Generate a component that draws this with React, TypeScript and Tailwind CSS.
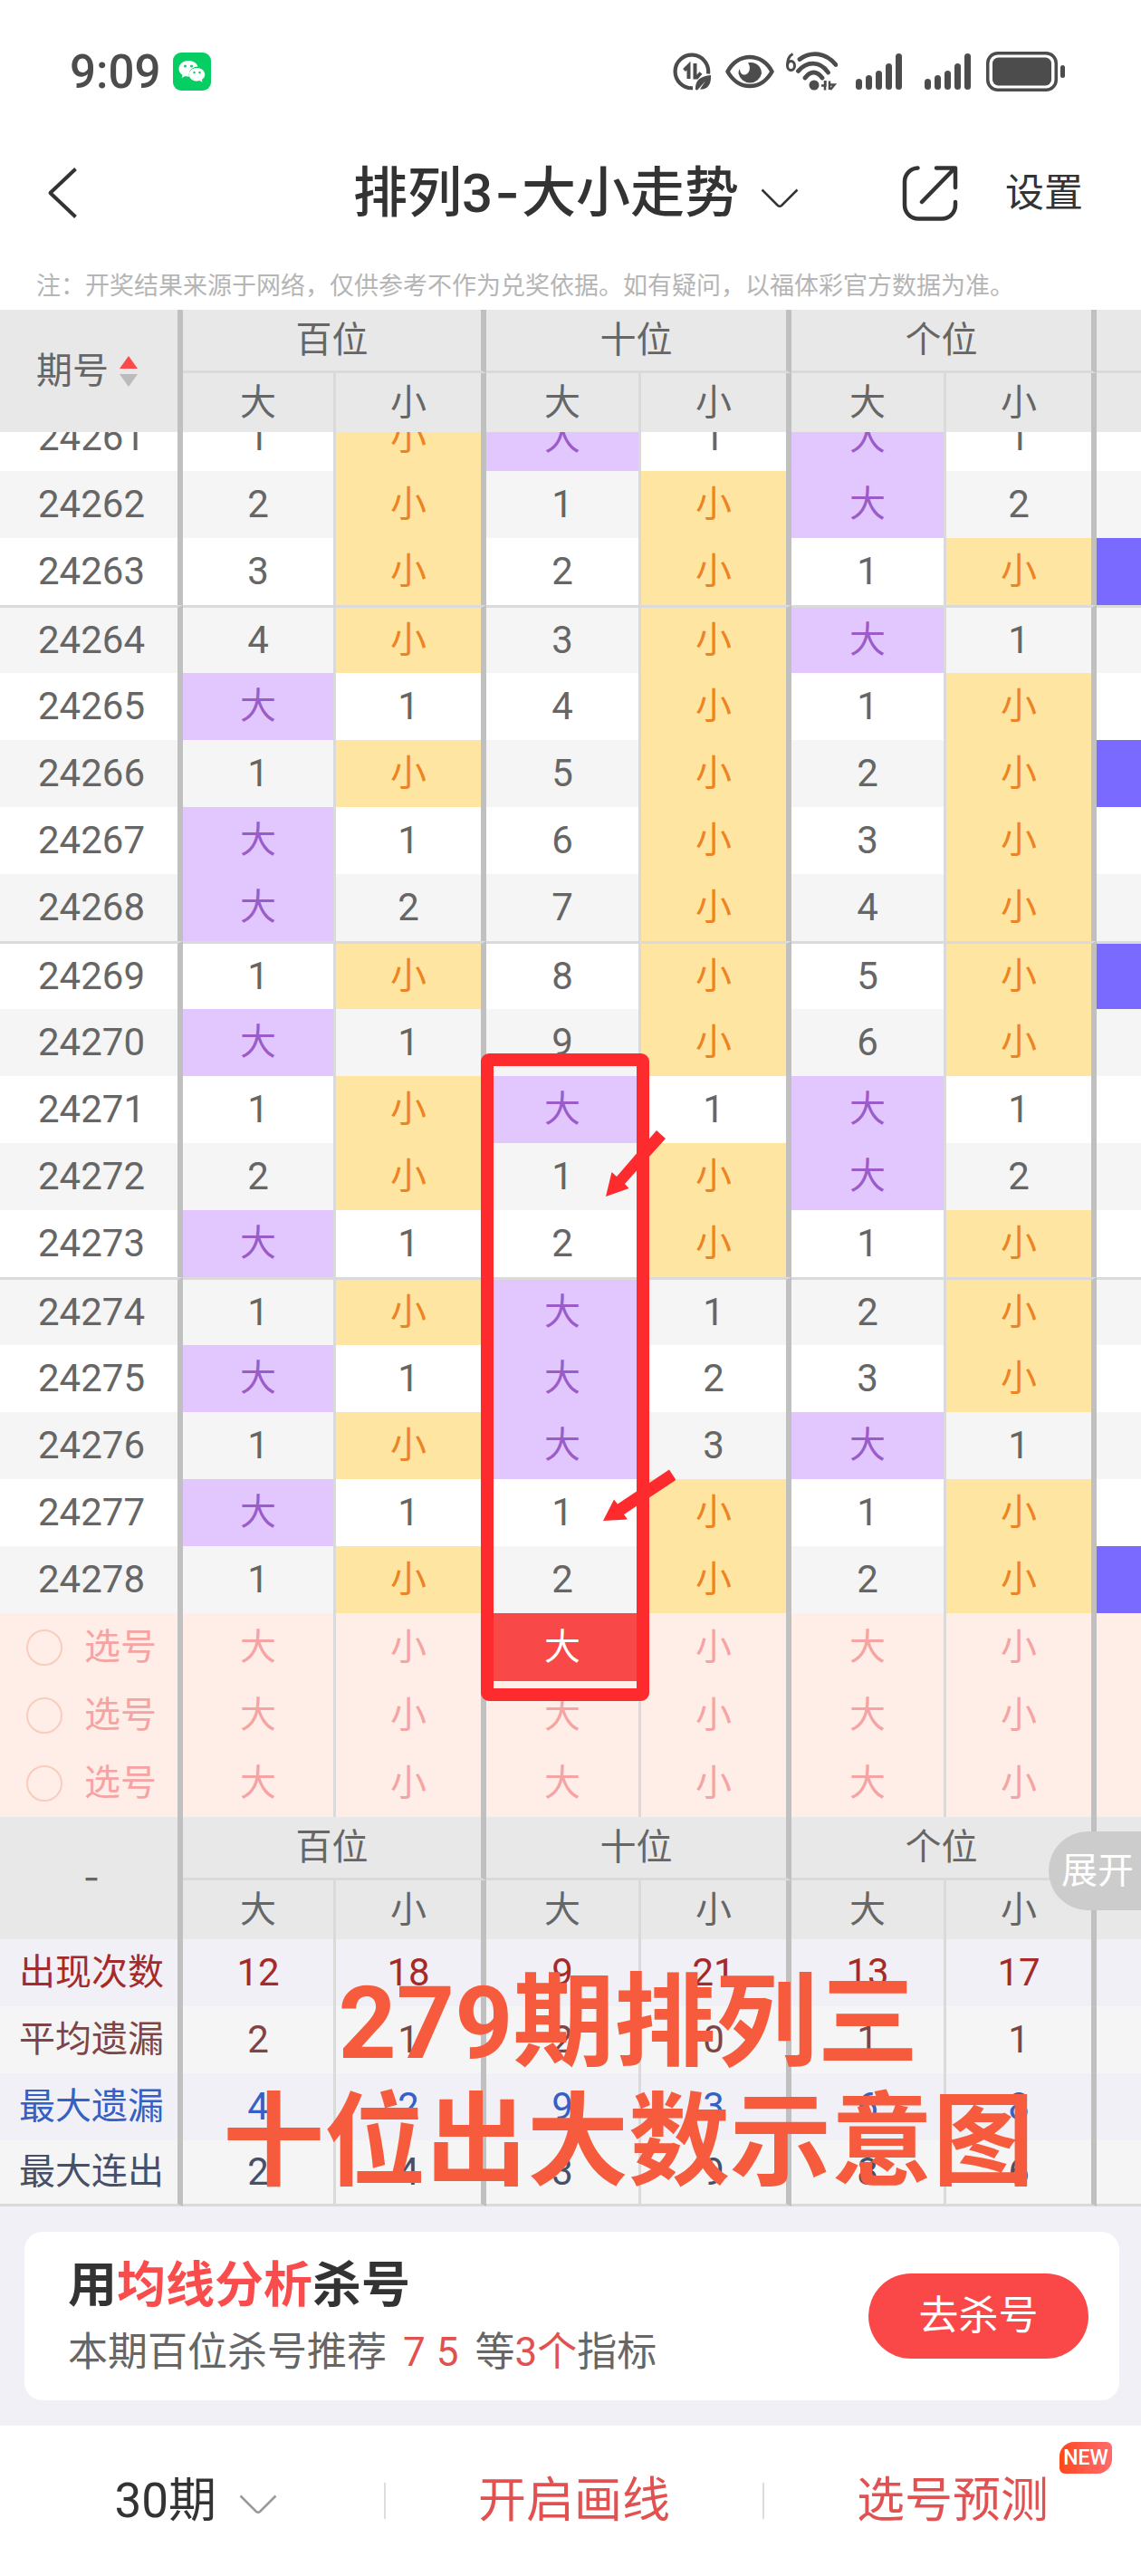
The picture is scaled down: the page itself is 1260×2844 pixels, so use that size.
const places = ['百位', '十位', '个位'];

// B = 大 drawn, S = 小 drawn; the digit is the miss count of the other side
const draws = [
  { issue: 24261, picks: ['S1', 'B1', 'B1'] },
  { issue: 24262, picks: ['S2', 'S1', 'B2'] },
  { issue: 24263, picks: ['S3', 'S2', 'S1'], mark: true },
  { issue: 24264, picks: ['S4', 'S3', 'B1'] },
  { issue: 24265, picks: ['B1', 'S4', 'S1'] },
  { issue: 24266, picks: ['S1', 'S5', 'S2'], mark: true },
  { issue: 24267, picks: ['B1', 'S6', 'S3'] },
  { issue: 24268, picks: ['B2', 'S7', 'S4'] },
  { issue: 24269, picks: ['S1', 'S8', 'S5'], mark: true },
  { issue: 24270, picks: ['B1', 'S9', 'S6'] },
  { issue: 24271, picks: ['S1', 'B1', 'B1'] },
  { issue: 24272, picks: ['S2', 'S1', 'B2'] },
  { issue: 24273, picks: ['B1', 'S2', 'S1'] },
  { issue: 24274, picks: ['S1', 'B1', 'S2'] },
  { issue: 24275, picks: ['B1', 'B2', 'S3'] },
  { issue: 24276, picks: ['S1', 'B3', 'B1'] },
  { issue: 24277, picks: ['B1', 'S1', 'S1'] },
  { issue: 24278, picks: ['S1', 'S2', 'S2'], mark: true },
];

const stats = [
  { label: '出现次数', values: [12, 18, 9, 21, 13, 17], color: 'text-[#a52a2a]', bg: 'bg-[#f1f0f6]' },
  { label: '平均遗漏', values: [2, 1, 2, 0, 1, 1], color: 'text-[#7d4545]', bg: 'bg-[#f5f5f5]' },
  { label: '最大遗漏', values: [4, 2, 9, 3, 6, 8], color: 'text-[#3560c4]', bg: 'bg-[#f1f0f6]' },
  { label: '最大连出', values: [2, 4, 3, 9, 8, 6], color: 'text-[#465069]', bg: 'bg-[#f5f5f5]' },
];

const thick = 'border-r-6 border-r-[#c0c0c0]';
const thin = 'border-r-3 border-r-[#dadada]';

function Columns() {
  return (
    <colgroup>
      <col className="w-[202px]" />
      <col className="w-[169px]" />
      <col />
      <col className="w-[171px]" />
      <col />
      <col className="w-[171px]" />
      <col />
      <col className="w-[49px]" />
    </colgroup>
  );
}

function HeadRows({ first }: { first: React.ReactNode }) {
  return (
    <thead className="bg-[#e8e8e8] text-[#666]">
      <tr className="h-[70px]">
        <th rowSpan={2} className={`p-0 font-normal ${thick}`}>
          {first}
        </th>
        {places.map((place) => (
          <th key={place} colSpan={2} className={`border-b-3 border-b-[#dadada] p-0 font-normal ${thick}`}>
            {place}
          </th>
        ))}
        <th className="border-b-3 border-b-[#dadada] p-0"></th>
      </tr>
      <tr className="h-[65px]">
        {places.map((place) => (
          <SizePair key={place} />
        ))}
        <th className="p-0"></th>
      </tr>
    </thead>
  );
}

function SizePair() {
  return (
    <>
      <th className={`p-0 font-normal ${thin}`}>大</th>
      <th className={`p-0 font-normal ${thick}`}>小</th>
    </>
  );
}

function PickCells({ pick, line }: { pick: string; line: string }) {
  const big = pick[0] === 'B';
  const miss = pick.slice(1);
  return (
    <>
      <td className={`p-0 ${thin} ${line} ${big ? 'bg-[#e1c7fe] text-[40px] text-[#9b5cc9]' : ''}`}>
        {big ? '大' : miss}
      </td>
      <td className={`p-0 ${thick} ${line} ${big ? '' : 'bg-[#fee6a2] text-[40px] text-[#ed8322]'}`}>
        {big ? miss : '小'}
      </td>
    </>
  );
}

function DrawRow({ draw }: { draw: (typeof draws)[number] }) {
  const groupStart = draw.issue % 5 === 4;
  const line = groupStart ? 'border-t-3 border-t-[#dadada]' : '';
  return (
    <tr className={`${groupStart ? 'h-[75px]' : 'h-[74px]'} ${draw.issue % 2 ? 'bg-white' : 'bg-[#f5f5f5]'}`}>
      <td className={`p-0 pl-1.5 ${thick} ${line}`}>{draw.issue}</td>
      {draw.picks.map((pick, i) => (
        <PickCells key={i} pick={pick} line={line} />
      ))}
      <td className={`p-0 ${line} ${draw.mark ? 'bg-[#7a6aff]' : ''}`}></td>
    </tr>
  );
}

function ChoiceRow({ index }: { index: number }) {
  return (
    <tr className="h-[75px] bg-[#feeee7] text-[40px] text-[#f6a3a4]">
      <td className={`p-0 ${thick}`}>
        <label className="flex items-center gap-6 pl-[29px]">
          <input
            type="radio"
            name="choice"
            className="size-10 appearance-none rounded-full border-2 border-[#f9cdbd]"
          />
          选号
        </label>
      </td>
      {places.map((place, i) => (
        <ChoicePair key={place} picked={index === 0 && i === 1} />
      ))}
      <td className="p-0"></td>
    </tr>
  );
}

function ChoicePair({ picked }: { picked: boolean }) {
  return (
    <>
      <td className={`p-0 ${thin}`}>
        <button className={`block h-[75px] w-full ${picked ? 'bg-[#f94848] text-white' : ''}`}>大</button>
      </td>
      <td className={`p-0 ${thick}`}>
        <button className="block h-[75px] w-full">小</button>
      </td>
    </>
  );
}

function StatusIcons() {
  return (
    <div className="flex items-center text-[#4c4c4c]">
      {/* Data saver */}
      <svg viewBox="0 0 42 42" className="mr-4 size-[42px]" fill="none" stroke="currentColor">
        <path d="M22 39.2A18.3 18.3 0 1 1 39 23.5" strokeWidth="4.2" />
        <path d="M17.5 29V14.5l-5 5M24.500 12v15.500h2l4.500-5" strokeWidth="4" />
        <path d="M25 41c-.5-10 5-15 17-16 .5 11-4 16-12 15.500l6-9-9 10z" fill="currentColor" stroke="none" />
      </svg>
      {/* Eye comfort */}
      <svg viewBox="0 0 54 38" className="mr-3 h-[38px] w-[54px]">
        <path
          d="M2.500 19C8 9 17 3 27 3s19 6 24.500 16C46 29 37 35 27 35S8 29 2.500 19z"
          fill="none"
          stroke="currentColor"
          strokeWidth="4.500"
          strokeLinejoin="round"
        />
        <path d="M25 9.500c8-2 15 3.500 15 11.500a13 13 0 0 1-25.500 0c0-2 .5-4 1.500-5 0 5 3 7 6 6.500 5-1 6.500-9 3-13z" fill="currentColor" />
      </svg>
      {/* Wifi 6 */}
      <svg viewBox="0 0 58 44" className="mr-5 h-11 w-[58px]" fill="none" stroke="currentColor">
        <path d="M8.500 2.500C4 5 2.500 10 2.500 15" strokeWidth="3" />
        <ellipse cx="6.500" cy="15.500" rx="4" ry="5" strokeWidth="3" />
        <path d="M16 8.500C29-1 45 1 56 14.500M14.500 21.500C23 11 38 9 47.500 23M22 29c6-8 13-8 19 0" strokeWidth="4.800" strokeLinecap="round" />
        <circle cx="32" cy="37" r="5.500" fill="currentColor" stroke="none" />
        <path d="M40 37.500h4.500V32M44 32v10.500M49 42v-9.500M50 42l4.500-5.500h-5" strokeWidth="2.500" />
      </svg>
      <div className="mr-4 flex gap-6">
        <SignalBars />
        <SignalBars />
      </div>
      {/* Battery */}
      <svg viewBox="0 0 88 44" className="h-11 w-[88px]">
        <rect x="1.750" y="1.750" width="75.500" height="40.500" rx="11" fill="none" stroke="currentColor" strokeWidth="3.500" />
        <rect x="7" y="6.500" width="65" height="31" rx="6.500" fill="currentColor" />
        <rect x="82" y="15" width="5" height="14" rx="2.500" fill="currentColor" />
      </svg>
    </div>
  );
}

function SignalBars() {
  return (
    <svg viewBox="0 0 52 42" className="h-[42px] w-[52px]" fill="currentColor">
      <rect x="0" y="29" width="7" height="12" rx="3.500" />
      <rect x="11" y="25" width="7" height="16" rx="3.500" />
      <rect x="22" y="20" width="7" height="21" rx="3.500" />
      <rect x="33" y="12" width="7" height="29" rx="3.500" />
      <rect x="44" y="1" width="7" height="40" rx="3.500" />
    </svg>
  );
}

function ChatBadge() {
  return (
    <svg viewBox="0 0 42 42" className="size-[42px]">
      <rect width="42" height="42" rx="9" fill="#07ce63" />
      <path d="M17 9C11 9 6.500 13 6.500 18c0 3 1.500 5 4 6.800l-.8 3.200 3.800-2c1.500.5 3 .7 4.500.6-1.500-6 3-11 9.500-11C26.500 11.500 22 9 17 9z" fill="#fff" />
      <path d="M26.500 17c-5 0-8.800 3.200-8.800 7.300s3.800 7.300 8.800 7.300c1 0 2-.2 3-.5l3 1.700-.7-2.800c2.200-1.400 3.500-3.400 3.500-5.700 0-4.100-3.800-7.300-8.800-7.300z" fill="#fff" />
      <g fill="#07ce63">
        <circle cx="13.500" cy="15" r="1.500" />
        <circle cx="20.500" cy="15" r="1.500" />
        <circle cx="23.500" cy="22" r="1.200" />
        <circle cx="29.500" cy="22" r="1.200" />
      </g>
    </svg>
  );
}

function Chevron({ className }: { className: string }) {
  return (
    <svg viewBox="0 0 42 22" className={`h-[22px] w-[42px] ${className}`} fill="none" stroke="currentColor" strokeWidth="2.500">
      <path d="M1.500 1.500L19 19q2 1.500 4 0L40.500 1.500" />
    </svg>
  );
}

// Hand-drawn marks over the 十位 column
function Marks() {
  return (
    <svg
      viewBox="0 0 216 716"
      className="pointer-events-none absolute top-[821px] left-[530px] h-[716px] w-[216px]"
      fill="#fd2b2e"
    >
      <rect x="8" y="7" width="172" height="701" rx="2" fill="none" stroke="#fd2b2e" strokeWidth="14" strokeLinejoin="round" />
      <path d="M139 158l6.500-27 5.500 5 44-51 10 9-45 50 4.500 5z" />
      <path d="M136 516l12-23.500 4 5 57-38 7.500 11.500-57.500 38 4 5.500z" />
    </svg>
  );
}

export default function App() {
  return (
    <div lang="zh-CN" className="min-h-screen bg-white font-['Roboto','Noto_Sans_CJK_SC',sans-serif] text-[#333]">
      {/* Status bar */}
      <div className="flex h-[158px] items-center justify-between pr-[83px] pl-[77px]">
        <div className="flex items-center gap-3.5">
          <span className="text-[51px] leading-none font-medium text-[#4c4c4c]">9:09</span>
          <ChatBadge />
        </div>
        <StatusIcons />
      </div>

      {/* Title bar */}
      <header className="grid h-[110px] grid-cols-[1fr_auto_1fr] items-center pr-[52px] pl-16">
        <button aria-label="返回" className="-ml-3 w-fit">
          <svg viewBox="0 0 34 56" className="h-14 w-[34px]" fill="none" stroke="#333" strokeWidth="4">
            <path d="M31.500 1.500L3.500 28l28 26.500" strokeLinejoin="round" />
          </svg>
        </button>
        <button className="flex items-center gap-6">
          <h1 className="text-[60px] leading-none font-medium">
            排列3<span className="mx-0.5 font-['Inter']">-</span>大小走势
          </h1>
          <Chevron className="mt-3" />
        </button>
        <div className="flex items-center justify-end gap-[52px] pr-3">
          <button aria-label="分享">
            <svg viewBox="0 0 62 62" className="size-[62px]" fill="none" stroke="#333" strokeWidth="4.500" strokeLinecap="round">
              <path d="M17.500 3.500A15 15 0 0 0 3 18.500v26a15 15 0 0 0 15 15h26a15 15 0 0 0 15-15V41" />
              <path d="M38 3.500h21V25M57.500 4.500L22 41" strokeLinejoin="round" />
            </svg>
          </button>
          <button className="text-[43px] leading-none">设置</button>
        </div>
      </header>

      <p className="h-[74px] px-10 pt-[30px] text-[27px] leading-9 whitespace-nowrap text-[#b5b5b5]">
        注：开奖结果来源于网络，仅供参考不作为兑奖依据。如有疑问，以福体彩官方数据为准。
      </p>

      {/* Trend chart */}
      <main className="relative overflow-hidden text-center text-[40px] leading-none">
        <table className="w-full table-fixed border-separate border-spacing-0">
          <Columns />
          <HeadRows
            first={
              <button className="flex w-full items-center gap-3 pl-10">
                期号
                <svg viewBox="0 0 20 34" className="h-[34px] w-5">
                  <path d="M10 0l10 14H0z" fill="#fa4a4a" />
                  <path d="M10 34l10-14H0z" fill="#bbb" />
                </svg>
              </button>
            }
          />
        </table>

        <div className="overflow-hidden">
          {/* scrolled so that the first row is partly under the header */}
          <table className="-mt-[31px] w-full table-fixed border-separate border-spacing-0 text-[42px] text-[#666]">
            <Columns />
            <tbody>
              {draws.map((draw) => (
                <DrawRow key={draw.issue} draw={draw} />
              ))}
              {[0, 1, 2].map((i) => (
                <ChoiceRow key={i} index={i} />
              ))}
            </tbody>
          </table>
        </div>

        <div className="relative">
          <table className="w-full table-fixed border-separate border-spacing-0">
            <Columns />
            <HeadRows first={<span className="pl-1.5 font-['Inter']">-</span>} />
            <tbody className="text-[42px]">
              {stats.map((row, r) => {
                const last = r === stats.length - 1;
                const line = last ? 'border-b-3 border-b-[#dadada]' : '';
                return (
                  <tr key={row.label} className={`${last ? 'h-[73px]' : 'h-[74px]'} ${row.bg} ${row.color}`}>
                    <th className={`p-0 pl-1.5 text-[40px] font-normal ${thick} ${line}`}>{row.label}</th>
                    {row.values.map((value, i) => (
                      <td key={i} className={`p-0 ${i % 2 ? thick : thin} ${line}`}>
                        {value}
                      </td>
                    ))}
                    <td className={`p-0 ${line}`}></td>
                  </tr>
                );
              })}
            </tbody>
          </table>

          <button className="absolute top-4 right-0 h-[87px] rounded-l-full bg-[#ccc] pr-2 pl-3.5 text-[40px] text-white">
            展开
          </button>

          <p className="pointer-events-none absolute inset-x-0 bottom-1 pl-[128px] text-[112px] leading-[132px] font-bold whitespace-nowrap text-[#f55b3c]">
            279期排列三
            <br />
            十位出大数示意图
          </p>
        </div>

        <Marks />
      </main>

      {/* Promo card */}
      <section className="bg-[#f1f0f6] py-7 pr-6 pl-[27px]">
        <div className="flex h-[186px] items-center justify-between rounded-[20px] bg-white pr-[34px] pl-12">
          <div className="pt-1.5">
            <h2 className="text-[54px] leading-[74px] font-bold">
              用<span className="text-[#f94c4c]">均线分析</span>杀号
            </h2>
            <p className="text-[44px] leading-[72px] text-[#666]">
              本期百位杀号推荐
              <span className="mx-[18px] inline-flex gap-3 text-[#e25151]">
                <span>7</span>
                <span>5</span>
              </span>
              等<span className="text-[#e25151]">3个</span>指标
            </p>
          </div>
          <button className="h-[94px] w-[243px] rounded-full bg-[#fa4848] text-[44px] leading-none text-white">
            去杀号
          </button>
        </div>
      </section>

      {/* Bottom bar */}
      <nav className="flex h-[166px] items-center text-[53px] leading-none">
        <label className="flex flex-1 items-center justify-center gap-6 pl-2">
          <select aria-label="期数" className="appearance-none bg-transparent">
            <option>30期</option>
            <option>50期</option>
          </select>
          <Chevron className="mt-2 text-[#999]" />
        </label>
        <div className="h-10 w-0.5 bg-[#ddd]"></div>
        <button className="flex-1 text-[#e25151]">开启画线</button>
        <div className="h-10 w-0.5 bg-[#ddd]"></div>
        <div className="relative flex flex-1 justify-center">
          <button className="text-[#e25151]">选号预测</button>
          <span className="absolute right-8 bottom-full mb-1 flex h-[35px] w-[58px] items-center justify-center rounded-tl-2xl rounded-tr-md rounded-br-2xl rounded-bl-md bg-linear-to-r from-[#ff4713] to-[#ff6b6b] text-[23px] font-medium text-white">
            NEW
          </span>
        </div>
      </nav>
    </div>
  );
}
